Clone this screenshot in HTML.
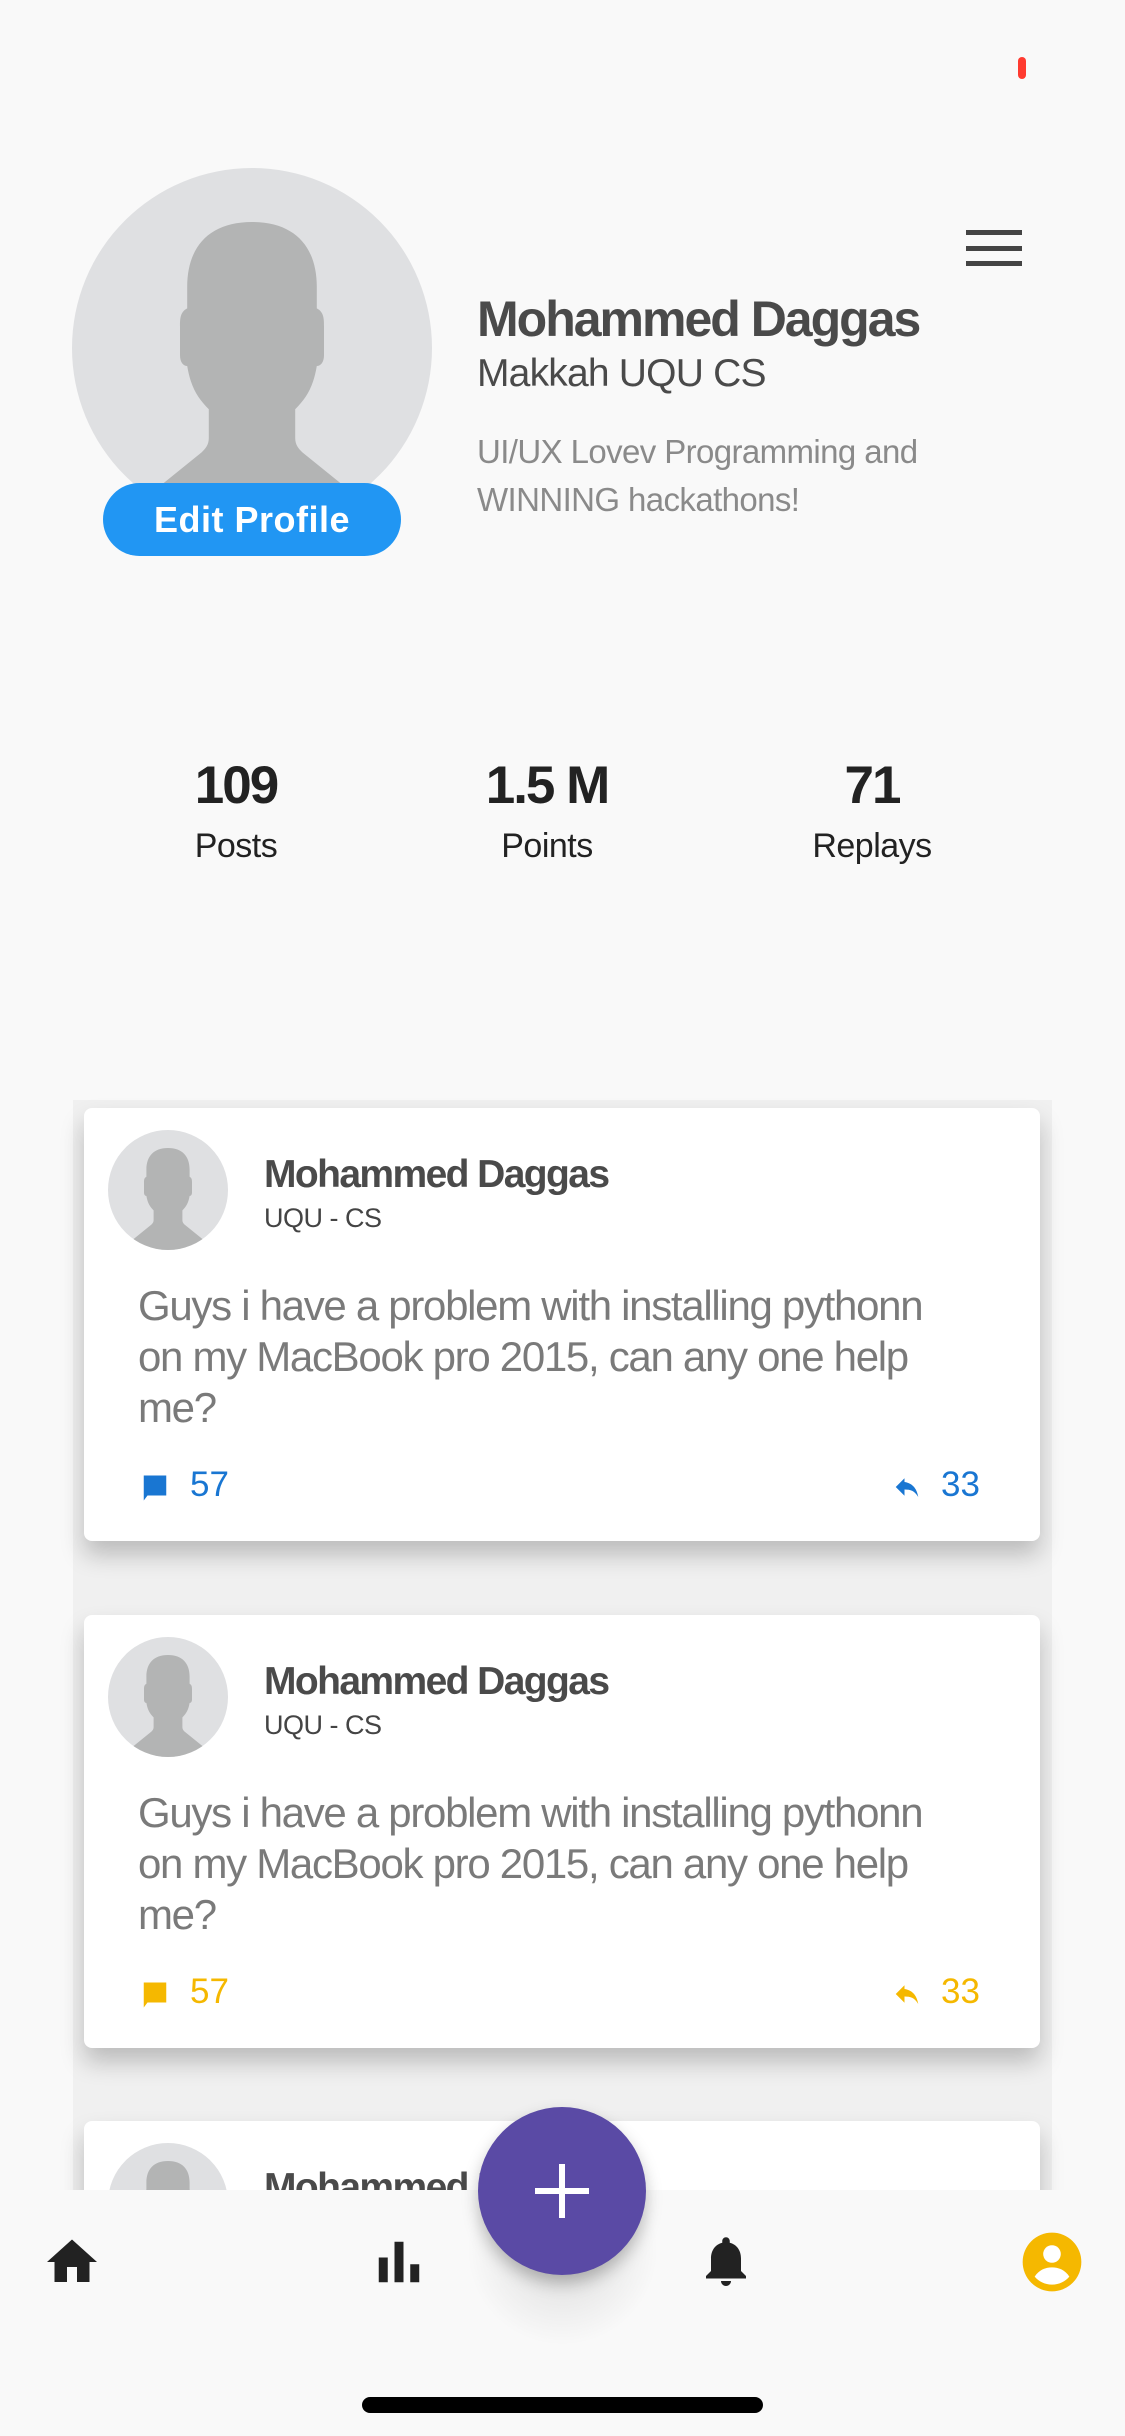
<!DOCTYPE html>
<html style="height:2436px;overflow:hidden"><head><meta charset="utf-8"><style>
*{margin:0;padding:0;box-sizing:border-box}
body{width:1125px;height:2436px;overflow:hidden;background:#f9f9f9;font-family:"Liberation Sans",sans-serif;position:relative}
.a{position:absolute}
.name{font-weight:bold;color:#4a4a4a;letter-spacing:-2px}
.card{position:absolute;left:84px;width:956px;height:433px;background:#fff;border-radius:8px;box-shadow:0 14px 24px rgba(0,0,0,0.22);overflow:hidden}
.card .cn{position:absolute;left:180px;top:45px;font-size:39px;font-weight:bold;color:#4a4a4a;letter-spacing:-1.6px}
.card .cs{position:absolute;left:180px;top:95px;font-size:27px;color:#444;letter-spacing:-0.5px}
.card .body{position:absolute;left:54px;top:172px;width:830px;font-size:42px;line-height:51px;color:#7a7a7a;letter-spacing:-1.3px}
.card .f{position:absolute;top:357px;font-size:35px}
</style></head><body>
<svg width="0" height="0" style="position:absolute"><defs><clipPath id="c" clipPathUnits="objectBoundingBox"><circle cx=".5" cy=".5" r=".5"/></clipPath>
<symbol id="av" viewBox="0 0 100 100"><circle cx="50" cy="50" r="50" fill="#dfe0e2"/><g clip-path="url(#cc)"><path fill="#b3b4b4" d="M50 15C38 15 32 22 32 33V39C30 40 30 42 30 44V52C30 54 31 55 32 55C33 61 35 64 38 67V75C38 77 37 78 36 79L10 100H90L64 79C63 78 62 77 62 75V67C65 64 67 61 68 55C69 55 70 54 70 52V44C70 42 70 40 68 39V33C68 22 62 15 50 15Z"/></g><clipPath id="cc"><circle cx="50" cy="50" r="50"/></clipPath></symbol></defs></svg>
<div class="a" style="left:1018px;top:57px;width:8px;height:22px;background:#ff3b30;border-radius:4px"></div>
<svg class="a" style="left:72px;top:168px" width="360" height="360"><use href="#av"/></svg>
<div class="a" style="left:103px;top:483px;width:298px;height:73px;background:#2196f3;border-radius:37px;color:#fff;font-size:36px;font-weight:bold;text-align:center;line-height:73px;letter-spacing:0.5px">Edit Profile</div>
<div class="a" style="left:966px;top:230px;width:56px;height:5px;background:#444"></div>
<div class="a" style="left:966px;top:246px;width:56px;height:5px;background:#444"></div>
<div class="a" style="left:966px;top:261px;width:56px;height:5px;background:#444"></div>
<div class="a name" style="left:477px;top:290px;font-size:50px">Mohammed Daggas</div>
<div class="a" style="left:477px;top:352px;font-size:39px;color:#4a4a4a;letter-spacing:-0.8px">Makkah UQU CS</div>
<div class="a" style="left:477px;top:428px;font-size:33px;line-height:48px;color:#8a8a8a;letter-spacing:-0.6px">UI/UX Lovev Programming and<br>WINNING hackathons!</div>
<div class="a" style="left:136px;top:755px;width:200px;text-align:center;font-size:53px;font-weight:bold;color:#222;letter-spacing:-2px">109</div>
<div class="a" style="left:136px;top:827px;width:200px;text-align:center;font-size:34px;color:#222;letter-spacing:-0.5px">Posts</div>
<div class="a" style="left:447px;top:755px;width:200px;text-align:center;font-size:53px;font-weight:bold;color:#222;letter-spacing:-2px">1.5 M</div>
<div class="a" style="left:447px;top:827px;width:200px;text-align:center;font-size:34px;color:#222;letter-spacing:-0.5px">Points</div>
<div class="a" style="left:772px;top:755px;width:200px;text-align:center;font-size:53px;font-weight:bold;color:#222;letter-spacing:-2px">71</div>
<div class="a" style="left:772px;top:827px;width:200px;text-align:center;font-size:34px;color:#222;letter-spacing:-0.5px">Replays</div>
<div class="a" style="left:73px;top:1100px;width:979px;height:1100px;background:#f0f0f0"></div>

<div class="card" style="top:1108px">
<svg class="a" style="left:24px;top:22px" width="120" height="120"><use href="#av"/></svg>
<div class="cn">Mohammed Daggas</div><div class="cs">UQU - CS</div>
<div class="body">Guys i have a problem with installing pythonn on my MacBook pro 2015, can any one help me?</div>
<svg class="a" style="left:56px;top:364px" width="30" height="32" viewBox="0 0 24 24"><path d="M3 2h18v16H6l-3 4z" fill="#1976d2"/></svg>
<div class="f" style="left:106px;color:#1976d2">57</div>
<svg class="a" style="left:808px;top:364px" width="30" height="30" viewBox="0 0 24 24"><path d="M10 5L3 12l7 7v-5c5 0 8 1 11 6-1-6-4-11-11-12z" fill="#1976d2"/></svg>
<div class="f" style="left:857px;color:#1976d2">33</div>
</div>

<div class="card" style="top:1615px">
<svg class="a" style="left:24px;top:22px" width="120" height="120"><use href="#av"/></svg>
<div class="cn">Mohammed Daggas</div><div class="cs">UQU - CS</div>
<div class="body">Guys i have a problem with installing pythonn on my MacBook pro 2015, can any one help me?</div>
<svg class="a" style="left:56px;top:364px" width="30" height="32" viewBox="0 0 24 24"><path d="M3 2h18v16H6l-3 4z" fill="#f5b800"/></svg>
<div class="f" style="left:106px;color:#f5b800">57</div>
<svg class="a" style="left:808px;top:364px" width="30" height="30" viewBox="0 0 24 24"><path d="M10 5L3 12l7 7v-5c5 0 8 1 11 6-1-6-4-11-11-12z" fill="#f5b800"/></svg>
<div class="f" style="left:857px;color:#f5b800">33</div>
</div>

<div class="card" style="top:2121px;height:200px">
<svg class="a" style="left:24px;top:22px" width="120" height="120"><use href="#av"/></svg>
<div class="cn">Mohammed Daggas</div>
</div>

<div class="a" style="left:0;top:2190px;width:1125px;height:246px;background:#f9f9f9"></div>
<div class="a" style="left:455px;top:2150px;width:215px;height:200px;border-radius:50%;background:radial-gradient(circle,rgba(0,0,0,0.12),rgba(0,0,0,0) 65%)"></div>
<div class="a" style="left:478px;top:2107px;width:168px;height:168px;border-radius:50%;background:#5a4aa5;box-shadow:0 8px 16px rgba(0,0,0,0.25)"></div>
<div class="a" style="left:535px;top:2188px;width:54px;height:6px;background:#fff"></div>
<div class="a" style="left:559px;top:2164px;width:6px;height:54px;background:#fff"></div>

<svg class="a" style="left:42px;top:2232px" width="60" height="60" viewBox="0 0 24 24"><path d="M10 20v-6h4v6h5v-8h3L12 3 2 12h3v8z" fill="#222"/></svg>
<svg class="a" style="left:372px;top:2232px" width="54" height="60" viewBox="0 0 24 24"><path d="M3 10h4v11H3zM10 3h4v18h-4zM17 13h4v8h-4z" fill="#222"/></svg>
<svg class="a" style="left:696px;top:2228px" width="60" height="66" viewBox="0 0 24 24"><path d="M12 22c1.1 0 2-.9 2-2h-4c0 1.1.9 2 2 2zm6-6v-5c0-3.1-1.6-5.6-4.5-6.3V4c0-.8-.7-1.5-1.5-1.5s-1.5.7-1.5 1.5v.7C7.6 5.4 6 7.9 6 11v5l-2 2v1h16v-1z" fill="#222"/></svg>
<svg class="a" style="left:1020px;top:2230px" width="64" height="64" viewBox="0 0 24 24"><circle cx="12" cy="12" r="11" fill="#f5b800"/><circle cx="12" cy="9" r="3.3" fill="#fff"/><path d="M5.5 17.5c1.5-2.5 4-3.5 6.5-3.5s5 1 6.5 3.5C17 19.3 14.7 20.5 12 20.5S7 19.3 5.5 17.5z" fill="#fff"/></svg>

<div class="a" style="left:362px;top:2397px;width:401px;height:16px;background:#000;border-radius:8px"></div>
</body></html>
